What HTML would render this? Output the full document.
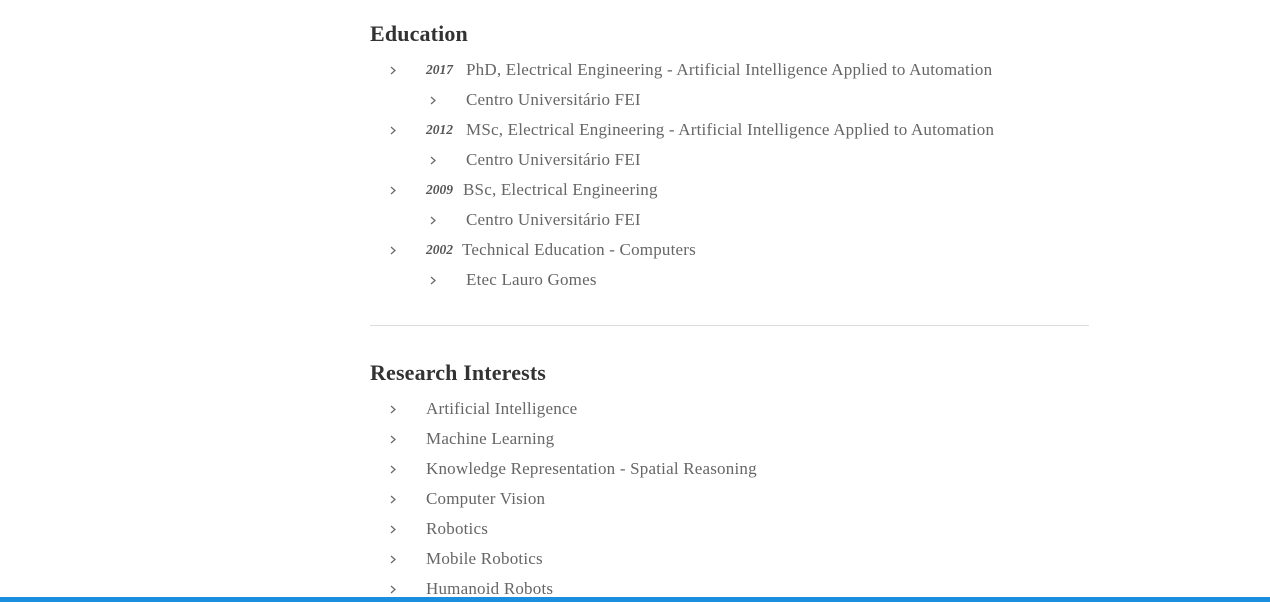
<!DOCTYPE html>
<html><head><meta charset="utf-8"><style>
body{margin:0;width:1270px;height:602px;overflow:hidden;background:#fff;font-family:"Liberation Serif",serif;color:#666;position:relative}
.h{position:absolute;left:370px;font-size:22px;font-weight:bold;color:#333;line-height:26px;letter-spacing:0.15px}
.l{position:absolute;font-size:17px;letter-spacing:0.2px;line-height:20px;white-space:nowrap}
.c{position:absolute;width:6px;height:9px}
.y{font-style:italic;font-weight:bold;font-size:13.5px;color:#555;letter-spacing:0}
hr{position:absolute;left:370px;top:325px;width:719px;margin:0;border:0;border-top:1px solid #ddd}
.bar{position:absolute;left:0;bottom:0;width:1270px;height:5px;background:#1a8fe0}
</style></head><body>
<svg width="0" height="0" style="position:absolute"><defs><symbol id="ch" viewBox="0 0 6 9"><path d="M1 1 L5 4.5 L1 8" fill="none" stroke="#666" stroke-width="1.2"/></symbol></defs></svg>
<div class="h" style="top:21px">Education</div>
<svg class="c" style="left:390px;top:66px"><use href="#ch"/></svg><div class="l" style="left:426px;top:60px"><span class="y" style="position:absolute;left:0;top:0">2017</span><span style="margin-left:40px">PhD, Electrical Engineering - Artificial Intelligence Applied to Automation</span></div>
<svg class="c" style="left:430px;top:96px"><use href="#ch"/></svg><div class="l" style="left:466px;top:90px">Centro Universitário FEI</div>
<svg class="c" style="left:390px;top:126px"><use href="#ch"/></svg><div class="l" style="left:426px;top:120px"><span class="y" style="position:absolute;left:0;top:0">2012</span><span style="margin-left:40px">MSc, Electrical Engineering - Artificial Intelligence Applied to Automation</span></div>
<svg class="c" style="left:430px;top:156px"><use href="#ch"/></svg><div class="l" style="left:466px;top:150px">Centro Universitário FEI</div>
<svg class="c" style="left:390px;top:186px"><use href="#ch"/></svg><div class="l" style="left:426px;top:180px"><span class="y" style="position:absolute;left:0;top:0">2009</span><span style="margin-left:37px">BSc, Electrical Engineering</span></div>
<svg class="c" style="left:430px;top:216px"><use href="#ch"/></svg><div class="l" style="left:466px;top:210px">Centro Universitário FEI</div>
<svg class="c" style="left:390px;top:246px"><use href="#ch"/></svg><div class="l" style="left:426px;top:240px"><span class="y" style="position:absolute;left:0;top:0">2002</span><span style="margin-left:36px">Technical Education - Computers</span></div>
<svg class="c" style="left:430px;top:276px"><use href="#ch"/></svg><div class="l" style="left:466px;top:270px">Etec Lauro Gomes</div>
<hr>
<div class="h" style="top:360px">Research Interests</div>
<svg class="c" style="left:390px;top:405px"><use href="#ch"/></svg><div class="l" style="left:426px;top:399px">Artificial Intelligence</div>
<svg class="c" style="left:390px;top:435px"><use href="#ch"/></svg><div class="l" style="left:426px;top:429px">Machine Learning</div>
<svg class="c" style="left:390px;top:465px"><use href="#ch"/></svg><div class="l" style="left:426px;top:459px">Knowledge Representation - Spatial Reasoning</div>
<svg class="c" style="left:390px;top:495px"><use href="#ch"/></svg><div class="l" style="left:426px;top:489px">Computer Vision</div>
<svg class="c" style="left:390px;top:525px"><use href="#ch"/></svg><div class="l" style="left:426px;top:519px">Robotics</div>
<svg class="c" style="left:390px;top:555px"><use href="#ch"/></svg><div class="l" style="left:426px;top:549px">Mobile Robotics</div>
<svg class="c" style="left:390px;top:585px"><use href="#ch"/></svg><div class="l" style="left:426px;top:579px">Humanoid Robots</div>
<div class="bar"></div>
</body></html>
